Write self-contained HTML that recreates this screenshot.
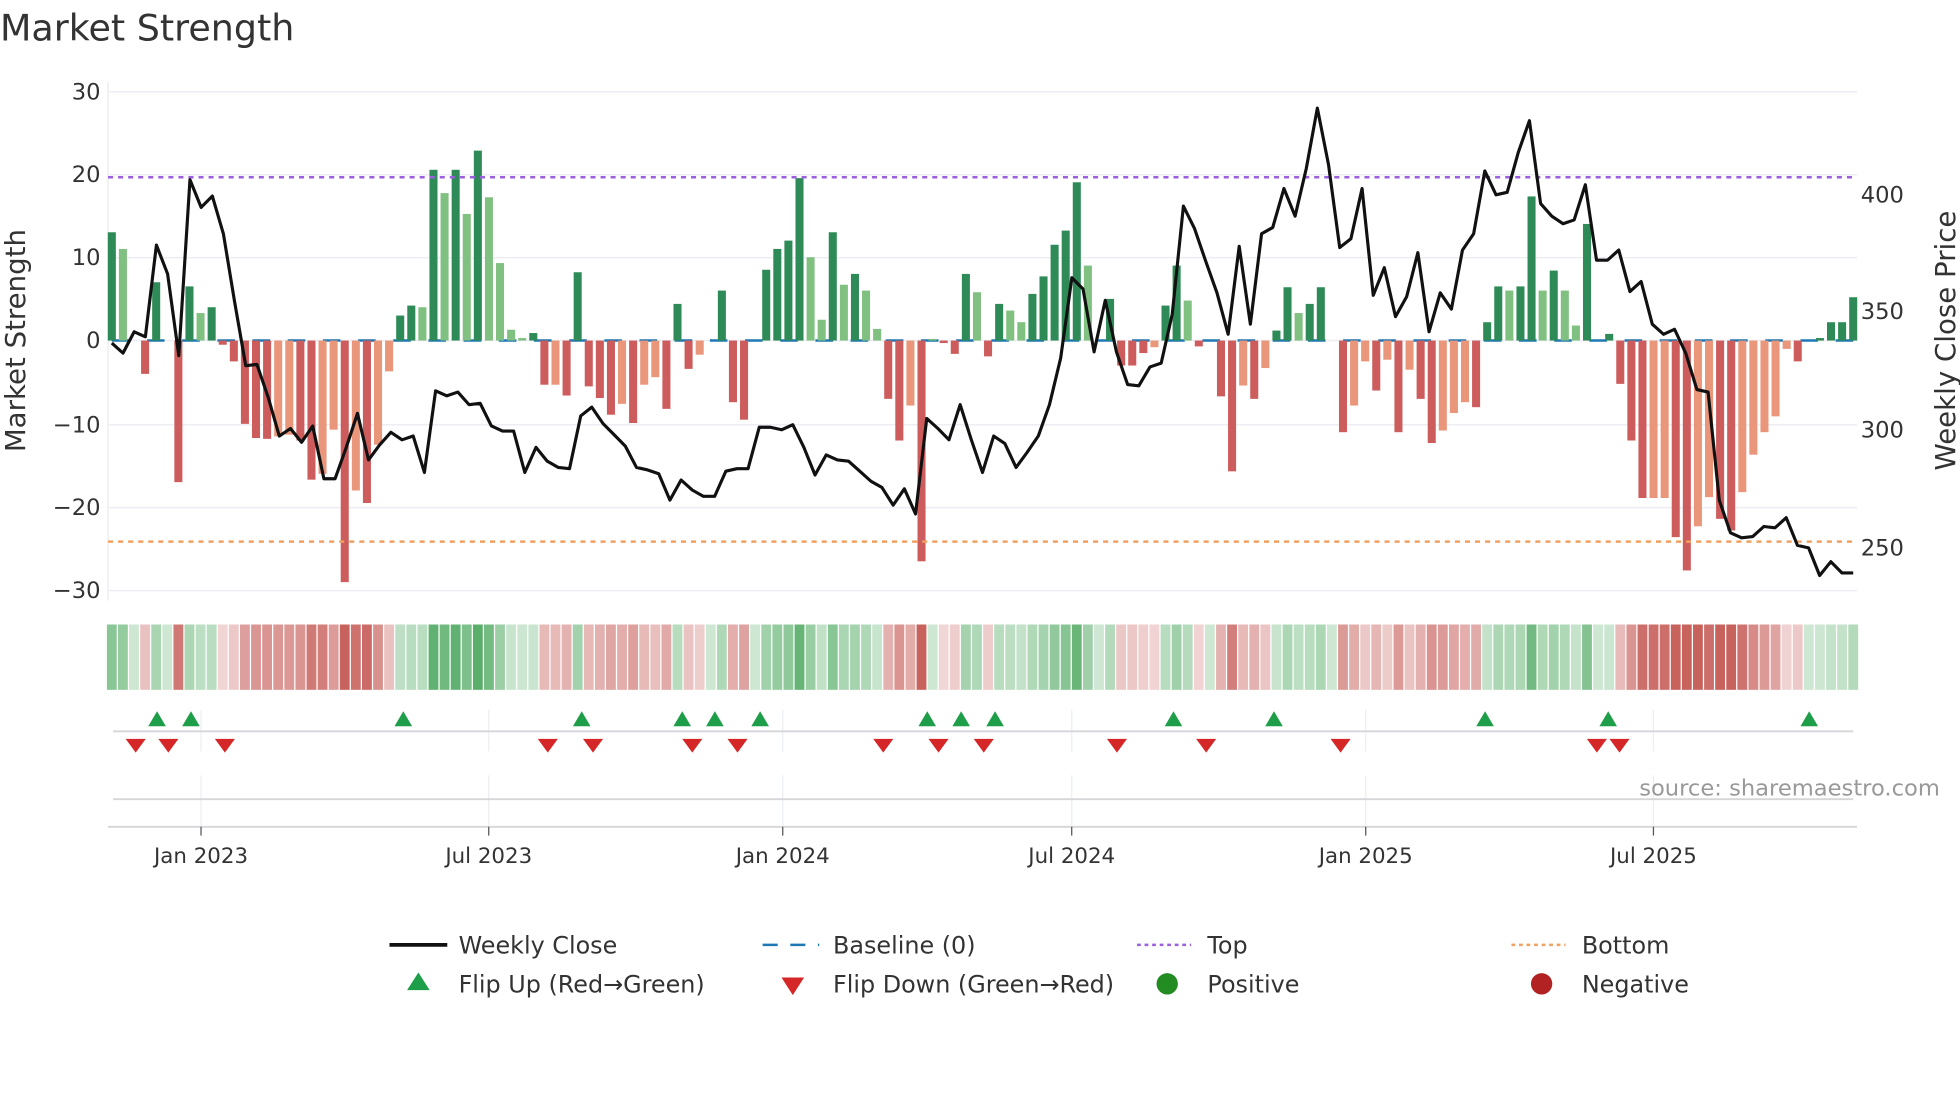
<!DOCTYPE html>
<html><head><meta charset="utf-8"><style>
html,body{margin:0;padding:0;background:#fff;}
svg{display:block;font-family:"DejaVu Sans","Liberation Sans",sans-serif;}
</style></head><body>
<svg id="s" width="1960" height="1102" viewBox="0 0 1560 877" xmlns="http://www.w3.org/2000/svg">
<rect width="1560" height="877" fill="#fff"/>
<text x="0" y="32" font-size="29" fill="#333">Market Strength</text>
<g id="grid" stroke="#eceef3" stroke-width="1.2">
<line x1="86" y1="73" x2="1478" y2="73"/><line x1="86" y1="139" x2="1478" y2="139"/>
<line x1="86" y1="205" x2="1478" y2="205"/><line x1="86" y1="271" x2="1478" y2="271"/>
<line x1="86" y1="338" x2="1478" y2="338"/><line x1="86" y1="404" x2="1478" y2="404"/>
<line x1="86" y1="470" x2="1478" y2="470"/><line x1="86" y1="65" x2="86" y2="478"/>
</g>
<g font-size="18" fill="#333" text-anchor="end">
<text x="80" y="79">30</text><text x="80" y="145">20</text><text x="80" y="211">10</text>
<text x="80" y="277">0</text><text x="80" y="344">−10</text><text x="80" y="410">−20</text><text x="80" y="476">−30</text>
</g>
<g font-size="18" fill="#333">
<text x="1481" y="161">400</text><text x="1481" y="254">350</text><text x="1481" y="348">300</text><text x="1481" y="442">250</text>
</g>
<text transform="translate(20,271) rotate(-90)" font-size="22" fill="#333" text-anchor="middle">Market Strength</text>
<text transform="translate(1556,271) rotate(-90)" font-size="22" fill="#333" text-anchor="middle">Weekly Close Price</text>
<line x1="89" y1="271" x2="1478" y2="271" stroke="#1f77b4" stroke-width="2" stroke-dasharray="14 14"/>
<g id="bars"></g>
<line x1="86" y1="141" x2="1478" y2="141" stroke="#9b5fe0" stroke-width="2" stroke-dasharray="4 4"/>
<line x1="86" y1="431" x2="1478" y2="431" stroke="#f0a060" stroke-width="2" stroke-dasharray="4 4"/>
<polyline id="price" fill="none" stroke="#111" stroke-width="2.5" stroke-linejoin="round"/>
<g id="heat"></g>
<g stroke="#eceef3" stroke-width="1">
<line x1="160" y1="565" x2="160" y2="598"/><line x1="389" y1="565" x2="389" y2="598"/><line x1="623" y1="565" x2="623" y2="598"/>
<line x1="853" y1="565" x2="853" y2="598"/><line x1="1087" y1="565" x2="1087" y2="598"/><line x1="1316" y1="565" x2="1316" y2="598"/>
<line x1="160" y1="617" x2="160" y2="658"/><line x1="389" y1="617" x2="389" y2="658"/><line x1="623" y1="617" x2="623" y2="658"/>
<line x1="853" y1="617" x2="853" y2="658"/><line x1="1087" y1="617" x2="1087" y2="658"/><line x1="1316" y1="617" x2="1316" y2="658"/>
</g>
<line x1="90" y1="582" x2="1475" y2="582" stroke="#d4d6d9" stroke-width="1.5"/>
<line x1="90" y1="636" x2="1475" y2="636" stroke="#d4d6d9" stroke-width="1.5"/>
<line x1="86" y1="658" x2="1478" y2="658" stroke="#d4d6d9" stroke-width="1.5"/>
<g id="flips"></g>
<text x="1544" y="633" font-size="18" fill="#999" text-anchor="end">source: sharemaestro.com</text>
<g stroke="#555" stroke-width="1">
<line x1="160" y1="658" x2="160" y2="665"/><line x1="389" y1="658" x2="389" y2="665"/><line x1="623" y1="658" x2="623" y2="665"/>
<line x1="853" y1="658" x2="853" y2="665"/><line x1="1087" y1="658" x2="1087" y2="665"/><line x1="1316" y1="658" x2="1316" y2="665"/>
</g>
<g font-size="17" fill="#333" text-anchor="middle">
<text x="160" y="687">Jan 2023</text><text x="389" y="687">Jul 2023</text><text x="623" y="687">Jan 2024</text>
<text x="853" y="687">Jul 2024</text><text x="1087" y="687">Jan 2025</text><text x="1316" y="687">Jul 2025</text>
</g>
<g font-size="19" fill="#333">
<line x1="310" y1="752" x2="356" y2="752" stroke="#111" stroke-width="3"/>
<text x="365" y="759">Weekly Close</text>
<line x1="607" y1="752" x2="652" y2="752" stroke="#1f77b4" stroke-width="2" stroke-dasharray="12 10"/>
<text x="663" y="759">Baseline (0)</text>
<line x1="905" y1="752" x2="948" y2="752" stroke="#9b5fe0" stroke-width="2" stroke-dasharray="3 3"/>
<text x="961" y="759">Top</text>
<line x1="1203" y1="752" x2="1246" y2="752" stroke="#f0a060" stroke-width="2" stroke-dasharray="3 3"/>
<text x="1259" y="759">Bottom</text>
<polygon points="324,788 342,788 333,774" fill="#1e9e48"/>
<text x="365" y="790">Flip Up (Red→Green)</text>
<polygon points="622,778 640,778 631,792" fill="#d62728"/>
<text x="663" y="790">Flip Down (Green→Red)</text>
<circle cx="929" cy="783" r="8.5" fill="#228b22"/>
<text x="961" y="790">Positive</text>
<circle cx="1227" cy="783" r="8.5" fill="#b22222"/>
<text x="1259" y="790">Negative</text>
</g>
</svg>
<script>
var NS="http://www.w3.org/2000/svg";
function el(p,t,a){var e=document.createElementNS(NS,t);for(var k in a)e.setAttribute(k,a[k]);p.appendChild(e);return e;}
var B=[[13,'D'],[11,'L'],[0,'Z'],[-4,'R'],[7,'D'],[0,'Z'],[-17,'R'],[6.5,'D'],[3.3,'L'],[4,'D'],[-0.5,'R'],[-2.5,'R'],[-10,'R'],[-11.7,'R'],[-11.8,'R'],[-11.5,'O'],[-11.3,'O'],[-12,'R'],[-16.7,'R'],[-16,'O'],[-10.7,'O'],[-29,'R'],[-18,'O'],[-19.5,'R'],[-12.5,'O'],[-3.7,'O'],[3,'D'],[4.2,'D'],[4,'L'],[20.5,'D'],[17.7,'L'],[20.5,'D'],[15.2,'L'],[22.8,'D'],[17.2,'L'],[9.3,'L'],[1.3,'L'],[0.3,'L'],[0.9,'D'],[-5.3,'R'],[-5.3,'O'],[-6.6,'R'],[8.2,'D'],[-5.5,'R'],[-6.9,'R'],[-8.9,'R'],[-7.6,'O'],[-9.9,'R'],[-5.3,'O'],[-4.4,'O'],[-8.2,'R'],[4.4,'D'],[-3.4,'R'],[-1.7,'O'],[0,'Z'],[6,'D'],[-7.4,'R'],[-9.5,'R'],[0,'Z'],[8.5,'D'],[11,'D'],[12,'D'],[19.5,'D'],[10,'L'],[2.5,'L'],[13,'D'],[6.7,'L'],[8,'D'],[6,'L'],[1.4,'L'],[-7,'R'],[-12,'R'],[-7.8,'O'],[-26.5,'R'],[0.2,'L'],[-0.3,'R'],[-1.6,'R'],[8,'D'],[5.8,'L'],[-1.9,'R'],[4.4,'D'],[3.6,'L'],[2.2,'L'],[5.6,'D'],[7.7,'D'],[11.5,'D'],[13.2,'D'],[19,'D'],[9,'L'],[0,'Z'],[5,'D'],[-3,'R'],[-3,'R'],[-1.5,'R'],[-0.8,'O'],[4.2,'D'],[9,'D'],[4.8,'L'],[-0.7,'R'],[0,'Z'],[-6.7,'R'],[-15.7,'R'],[-5.4,'O'],[-7,'R'],[-3.3,'O'],[1.2,'D'],[6.4,'D'],[3.3,'L'],[4.4,'D'],[6.4,'D'],[0,'Z'],[-11,'R'],[-7.8,'O'],[-2.5,'O'],[-6,'R'],[-2.3,'O'],[-11,'R'],[-3.5,'O'],[-7,'R'],[-12.3,'R'],[-10.8,'O'],[-8.7,'O'],[-7.4,'O'],[-8,'R'],[2.2,'D'],[6.5,'D'],[6,'L'],[6.5,'D'],[17.3,'D'],[6,'L'],[8.4,'D'],[6,'L'],[1.8,'L'],[14,'D'],[0,'Z'],[0.8,'D'],[-5.2,'R'],[-12,'R'],[-18.9,'R'],[-18.9,'O'],[-18.9,'O'],[-23.6,'R'],[-27.6,'R'],[-22.3,'O'],[-18.8,'O'],[-21.4,'R'],[-22.8,'R'],[-18.2,'O'],[-13.7,'O'],[-11,'O'],[-9.1,'O'],[-1,'O'],[-2.5,'R'],[0,'Z'],[0.3,'D'],[2.2,'D'],[2.2,'D'],[5.2,'D']];
var C={D:'#2e8b57',L:'#80c080',R:'#cd5c5c',O:'#e9967a',Z:'#fff'};
var n=B.length,x0=89,x1=1475,dx=(x1-x0)/(n-1);
var gb=document.getElementById('bars'),gh=document.getElementById('heat');
for(var i=0;i<n;i++){var v=B[i][0],x=x0+i*dx;
 if(B[i][1]!='Z'&&v!=0){var h=Math.abs(v)*6.63;el(gb,'rect',{x:x-3.2,y:v>0?271-h:271,width:6.4,height:h,fill:C[B[i][1]]});}
 var a=Math.min(1,0.25+Math.abs(v)/28);var col=v>=0?'rgba(60,160,80,'+(0.25+0.6*Math.min(1,Math.abs(v)/22))+')':'rgba(190,70,65,'+a*0.85+')';
 el(gh,'rect',{x:x-dx/2+0.5,y:497,width:dx-1,height:52,fill:col});}
var P=[273,281,264,268,195,218,283,143,165,156,186,240,291,290,316,347,341,352,339,381,381,356,329,366,354,344,350,347,376,311,315,312,322,321,339,343,343,376,356,367,372,373,331,324,337,346,355,372,374,377,398,382,390,395,395,375,373,373,340,340,342,338,356,378,362,366,367,375,383,388,402,389,409,333,341,350,322,350,376,347,353,372,360,347,322,285,221,230,280,239,280,306,307,292,289,250,164,182,208,233,266,196,258,186,181,150,172,134,86,131,197,190,150,235,213,252,236,201,264,233,246,199,186,136,155,153,121,96,162,172,178,175,147,207,207,199,232,224,258,266,262,281,310,312,398,424,428,427,419,420,412,434,436,458,447,456,456];
var pts=[],pdx=(x1-x0)/(P.length-1);for(var j=0;j<P.length;j++)pts.push((x0+j*pdx).toFixed(1)+','+P[j]);
document.getElementById('price').setAttribute('points',pts.join(' '));
var gf=document.getElementById('flips');
[125,152,321,463,543,569,605,738,765,792,934,1014,1182,1280,1440].forEach(function(x){el(gf,'polygon',{points:(x-7)+',578 '+(x+7)+',578 '+x+',566',fill:'#1e9e48'});});
[108,134,179,436,472,551,587,703,747,783,889,960,1067,1271,1289].forEach(function(x){el(gf,'polygon',{points:(x-8)+',588 '+(x+8)+',588 '+x+',599',fill:'#d62728'});});
</script>
</body></html>
